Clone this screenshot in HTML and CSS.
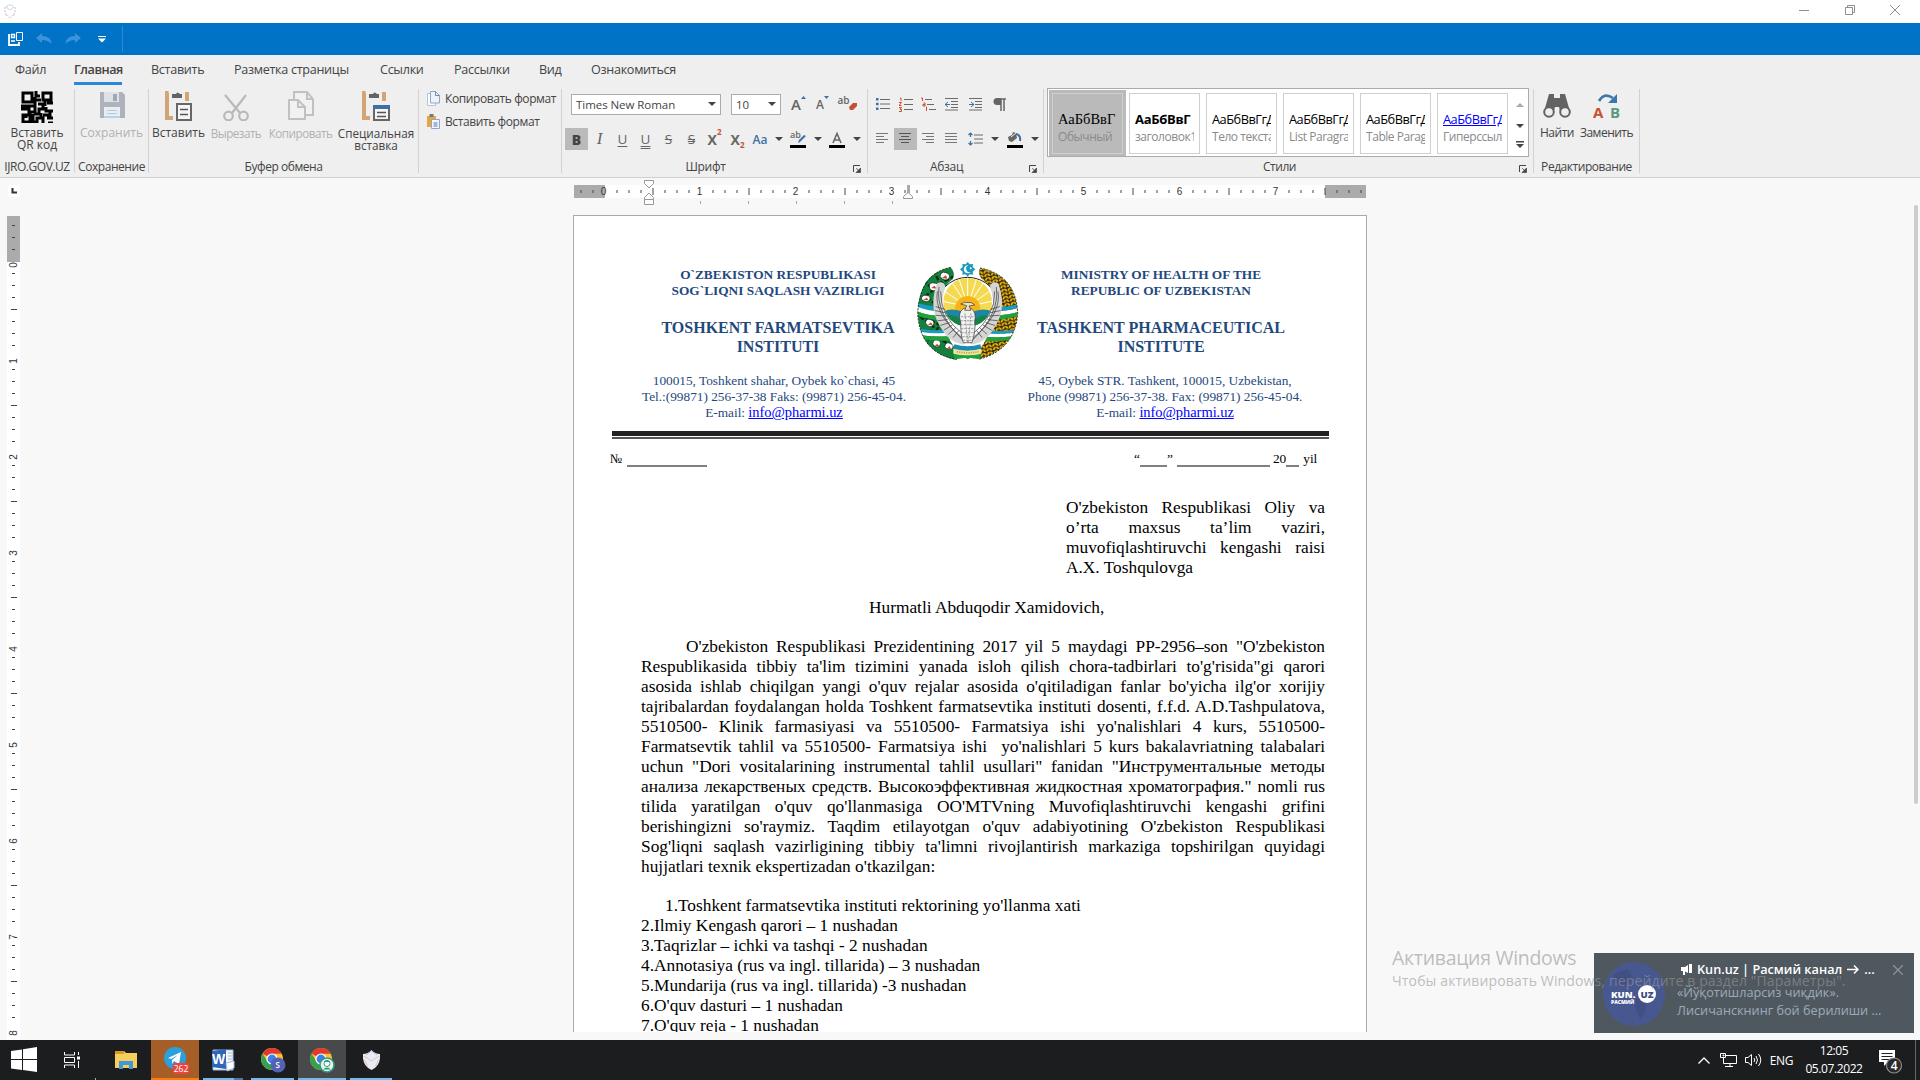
FILE: index.html
```html
<!DOCTYPE html>
<html lang="ru">
<head>
<meta charset="utf-8">
<title>Редактор документов</title>
<link rel="stylesheet" href="styles.css">
</head>
<body>
<svg width="0" height="0" class="defs">
  <defs>
    <symbol id="caret" viewBox="0 0 8 4"><path d="M0 0h8L4 4z" fill="#444"/></symbol>
    <symbol id="launch" viewBox="0 0 8 8"><path d="M.5 7V.5H7" fill="none" stroke="#444"/><path d="M3 3l3 3M7.5 3v4.500H3z" stroke="#444" fill="#444" stroke-width=".7"/></symbol>
    <symbol id="chrome" viewBox="0 0 24 24">
      <circle cx="12" cy="12" r="11" fill="#fbc02d"/>
      <path d="M12 12L2.500 6.500A11 11 0 0 1 21.600 6.800H12z" fill="#df3a2f"/>
      <path d="M2.500 6.500A11 11 0 0 0 11.500 23L16.500 14.500 12 12 7.400 14.600z" fill="#35a04f"/>
      <circle cx="12" cy="12" r="5.600" fill="#fff"/><circle cx="12" cy="12" r="4.400" fill="#3f7fe8"/>
    </symbol>
  </defs>
</svg>

<header class="titlebar">
  <svg class="app-icon" width="14" height="15" viewBox="0 0 14 15" fill="none"><path d="M3 3Q7-1 11 3" stroke="#a9c4ea" stroke-dasharray="2 1"/><path d="M2 3v5q1 3 5 6M12 3v5q-1 3-5 6" stroke="#efb3ae" stroke-dasharray="2 1"/><path d="M3 3l4 3 4-3M2 9l2 3M12 9l-2 3" stroke="#c9d3ea"/></svg>
  <div class="win-buttons">
    <svg width="10" height="10"><path d="M0 5.500h10" stroke="#8f8f8f"/></svg>
    <svg width="10" height="10" fill="none" stroke="#8f8f8f"><path d="M.5 2.500h7v7h-7zM2.500 2.500V.5h7v7h-2"/></svg>
    <svg width="10" height="10"><path d="M0 0l10 10M10 0L0 10" stroke="#8f8f8f"/></svg>
  </div>
</header>

<div class="quickbar">
  <svg width="15" height="14" viewBox="0 0 15 14" fill="none" stroke="#fff"><path d="M1 2v11h10v-3" stroke-width="1.800"/><path d="M3.500 2.500h3v3h-3zM3 9h4" stroke-width="1.400"/><path d="M8.500.5h6v8h-6z"/></svg>
  <svg width="16" height="12" viewBox="0 0 16 12"><path d="M0 5l6-5v3q9 0 9.500 8Q12 7 6 7v3z" fill="#3b93dc"/></svg>
  <svg width="16" height="12" viewBox="0 0 16 12"><path d="M16 5l-6-5v3Q1 3 .5 11 4 7 10 7v3z" fill="#3b93dc"/></svg>
  <svg width="8" height="7" viewBox="0 0 8 7"><path d="M0 0h8v1H0zM0 2.500h8L4 6.500z" fill="#fff"/></svg>
  <i class="quick-sep"></i>
</div>

<nav class="tabs">
  <a>Файл</a><a class="active">Главная</a><a>Вставить</a><a>Разметка страницы</a><a>Ссылки</a><a>Рассылки</a><a>Вид</a><a>Ознакомиться</a>
</nav>

<section class="ribbon">
  <div class="group">
    <div class="body big">
      <button class="tool"><svg width="32" height="32" viewBox="0 0 32 32" fill="none" stroke="#000" stroke-width="3"><path d="M2 2h9v9H2zM22 2h8v7h-8zM2 24h7v7H2zM5 24v3M15 0v5h4M15 9h5M14 6v9H0M0 18h8v3h6v-6M17 13h5v5h-4v5h-5M26 12h6M25 16v4h7M29 20v4h-7M12 23v8h4v-4h6v5M20 22v5M26 27h6M27 32h5M24 10v5"/></svg><span>Вставить<br>QR код</span></button>
    </div>
    <div class="caption">IJRO.GOV.UZ</div>
  </div>
  <div class="group">
    <div class="body big">
      <button class="tool off"><svg width="26" height="28" viewBox="0 0 26 28"><path d="M1 1h22l3 3v23H1z" fill="#aeb2bc"/><path d="M5 1h15v10H5z" fill="#dfe1e6"/><path d="M14 3h4v7h-4z" fill="#a3a7b3"/><path d="M5 16h16v10H5z" fill="#e9eef3"/><path d="M8 19.500h10M8 22.500h10" stroke="#b9c7d5"/><path d="M5 25h16v2H5z" fill="#b5d4e6"/></svg><span>Сохранить</span></button>
    </div>
    <div class="caption">Сохранение</div>
  </div>
  <div class="group clipboard">
    <div class="body big">
      <button class="tool"><svg width="28" height="30" viewBox="0 0 28 30"><path d="M3.500 2H2v25h6M20 3h2v7" fill="none" stroke="#d3a574" stroke-width="4"/><path d="M7 3h4q1-3 4 0h2v4H7z" fill="#636363"/><path d="M12 13h14v16H12z" fill="#f5f5f5" stroke="#666" stroke-width="2"/><path d="M15 18.500h8M15 23.500h8" stroke="#555" stroke-width="1.500"/></svg><span>Вставить</span></button>
      <button class="tool off"><svg width="28" height="30" viewBox="0 0 28 30" fill="none" stroke="#b9b9b9" stroke-width="2.200"><path d="M3 4l15 18M24 4L10 22" /><circle cx="6.500" cy="25" r="4.300"/><circle cx="21.500" cy="25" r="4.300"/></svg><span>Вырезать</span></button>
      <button class="tool off"><svg width="28" height="30" viewBox="0 0 28 30" fill="#f1f1f1" stroke="#c1c1c1" stroke-width="2"><path d="M7 1h13l6 7v16H7zM20 1v7h6"/><path d="M2 9h9l7 7v12H2z"/><path d="M11 9v7h7" fill="none"/></svg><span>Копировать</span></button>
      <button class="tool"><svg width="28" height="30" viewBox="0 0 28 30"><path d="M3.500 2H2v25h6M20 3h2v7" fill="none" stroke="#d3a574" stroke-width="4"/><path d="M7 3h4q1-3 4 0h2v4H7z" fill="#636363"/><path d="M12 15h15v14H12z" fill="#f5f5f5" stroke="#666" stroke-width="2"/><path d="M11 14h17v4H11z" fill="#3f6fa6"/><path d="M15 21.500h9M15 25.500h9" stroke="#555" stroke-width="1.500"/></svg><span>Специальная<br>вставка</span></button>
    </div>
    <div class="caption">Буфер обмена</div>
  </div>
  <div class="group formats">
    <div class="body">
      <button class="wide"><svg width="13" height="15" viewBox="0 0 13 15"><path d="M.5 2.500h8v12h-8z" fill="#fff" stroke="#b5c3da"/><path d="M3.500.5h5l4 4V12h-9z" fill="#eef3fb" stroke="#8fa6c8"/><path d="M8.500.5v4h4" fill="none" stroke="#6f89b2"/></svg>Копировать формат</button>
      <button class="wide"><svg width="13" height="15" viewBox="0 0 13 15"><path d="M0 2h9v11H0z" fill="#e5a63c"/><path d="M2.500 0h4v3h-4z" fill="#777"/><path d="M4.500 5.500h8v9h-8z" fill="#f3f7fd" stroke="#8fa6c8"/><path d="M6.500 8h4v5h-4z" fill="#9fb9de"/></svg>Вставить формат</button>
    </div>
  </div>
  <div class="group fonts">
    <div class="body">
      <div class="row">
        <div class="combo family">Times New Roman<svg width="8" height="4"><use href="#caret"/></svg></div>
        <div class="combo size">10<svg width="8" height="4"><use href="#caret"/></svg></div>
        <span class="cell grow1">A<svg width="5" height="3"><path d="M0 3l2.500-3L5 3z" fill="#3f6fa6"/></svg></span>
        <span class="cell grow2">A<svg width="5" height="3"><path d="M0 0h5L2.500 3z" fill="#3f6fa6"/></svg></span>
        <span class="cell clear">ab<svg width="8" height="7"><path d="M0 4l4-4h4v3L4 7H1z" fill="#c8502f"/></svg></span>
      </div>
      <div class="row">
        <span class="cell on"><b>B</b></span><span class="cell it">I</span><span class="cell u">U</span><span class="cell uu">U</span><span class="cell strike">S</span><span class="cell strike dbl">S</span>
        <span class="cell x">X<sup>2</sup></span><span class="cell x">X<sub>2</sub></span><span class="cell aa">Aa</span><span class="drop"><svg width="8" height="4"><use href="#caret"/></svg></span>
        <span class="cell"><svg width="17" height="17" viewBox="0 0 17 17"><path d="M0 14h16v3H0z"/><path d="M8 12l1-3 5-5 2 1-6 6z" fill="#3f6fa6"/><text x="0" y="7" class="tiny">ab</text></svg></span><span class="drop"><svg width="8" height="4"><use href="#caret"/></svg></span>
        <span class="cell"><svg width="17" height="17" viewBox="0 0 17 17"><path d="M0 14h16v3H0z"/><path d="M4 12L8 2.500 12 12M5.500 9h5" fill="none" stroke="#666" stroke-width="1.600"/></svg></span><span class="drop"><svg width="8" height="4"><use href="#caret"/></svg></span>
      </div>
    </div>
    <div class="caption">Шрифт<svg class="launch" width="8" height="8"><use href="#launch"/></svg></div>
  </div>
  <div class="group para">
    <div class="body">
      <div class="row">
        <span class="cell"><svg width="14" height="12"><path d="M4 1.500h10M4 6h10M4 10.500h10" stroke="#6a6a6a"/><path d="M0 0h2.500v2.500H0zM0 4.800h2.500v2.500H0zM0 9.500h2.500V12H0z" fill="#3f6fa6"/></svg></span>
        <span class="cell"><svg width="14" height="15"><path d="M5 2.500h9M5 7.500h9M5 12.500h9" stroke="#6a6a6a"/><path d="M1 1h1v3M0 5.500h2.500l-2.500 3h2.500M0 10.500h2.500l-1.500 2h1.500v2H0" fill="none" stroke="#c8502f"/></svg></span>
        <span class="cell"><svg width="15" height="14"><path d="M4 2.500h7M6 7.500h7M8 12.500h7" stroke="#6a6a6a"/><path d="M0 1h1.500v3M2.500 6h1.500v3H2V7.500h2M5.500 9.500V14" fill="none" stroke="#c8502f"/></svg></span>
        <span class="cell"><svg width="13" height="13"><path d="M0 .5h13M6 3.500h7M6 6.500h7M6 9.500h7M0 12h13" stroke="#6a6a6a"/><path d="M0 6.500h5M3 4L0 6.500 3 9" fill="none" stroke="#3f6fa6"/></svg></span>
        <span class="cell"><svg width="13" height="13"><path d="M0 .5h13M6 3.500h7M6 6.500h7M6 9.500h7M0 12h13" stroke="#6a6a6a"/><path d="M0 6.500h5M2 4l3 2.500L2 9" fill="none" stroke="#3f6fa6"/></svg></span>
        <span class="cell"><svg width="13" height="13"><path d="M8 1v12M11 1v12M5 1h8" fill="none" stroke="#666" stroke-width="1.500"/><path d="M8 0H4a3.500 3.500 0 0 0 0 7h4z" fill="#666"/></svg></span>
      </div>
      <div class="row">
        <span class="cell"><svg width="13" height="12"><path d="M0 .5h12M0 3.500h8M0 6.500h12M0 9.500h8" stroke="#777"/></svg></span>
        <span class="cell on"><svg width="13" height="12"><path d="M0 .5h12M2 3.500h8M0 6.500h12M2 9.500h8" stroke="#555"/></svg></span>
        <span class="cell"><svg width="13" height="12"><path d="M0 .5h12M4 3.500h8M0 6.500h12M4 9.500h8" stroke="#777"/></svg></span>
        <span class="cell"><svg width="13" height="12"><path d="M0 .5h12M0 3.500h12M0 6.500h12M0 9.500h12" stroke="#777"/></svg></span>
        <span class="cell"><svg width="15" height="14"><path d="M6 3h9M6 7h9M6 11h9" stroke="#6a6a6a"/><path d="M2.500 1v4M.5 3l2-2 2 2M2.500 9v4M.5 11l2 2 2-2" fill="none" stroke="#3f6fa6" stroke-width="1.200"/></svg></span><span class="drop"><svg width="8" height="4"><use href="#caret"/></svg></span>
        <span class="cell fill"><svg width="17" height="17" viewBox="0 0 17 17"><path d="M0 14h16v3H0z"/><path d="M1 6l4-2 1-3 3 1 1 5-5 4-3-1z" fill="#666"/><path d="M9 3q5 1 4 7" fill="none" stroke="#3f6fa6" stroke-width="2"/><path d="M4 6l5-4" stroke="#eee"/></svg></span><span class="drop"><svg width="8" height="4"><use href="#caret"/></svg></span>
      </div>
    </div>
    <div class="caption">Абзац<svg class="launch" width="8" height="8"><use href="#launch"/></svg></div>
  </div>
  <div class="group styles">
    <div class="gallery">
      <div class="style sel"><div><b class="serif">АаБбВвГ</b><span>Обычный</span></div></div>
      <div class="style"><div><b class="bold">АаБбВвГ</b><span>заголовок1</span></div></div>
      <div class="style"><div><b>АаБбВвГгД</b><span>Тело текста</span></div></div>
      <div class="style"><div><b>АаБбВвГгД</b><span>List Paragraph</span></div></div>
      <div class="style"><div><b>АаБбВвГгД</b><span>Table Paragraph</span></div></div>
      <div class="style"><div><b class="link">АаБбВвГгД</b><span>Гиперссылка</span></div></div>
      <div class="scroll"><svg width="8" height="50" viewBox="0 0 8 50"><path d="M0 4h8L4 0z" fill="#aaa"/><path d="M0 21h8l-4 4zM0 38h8v1.500H0zM0 41h8l-4 4z" fill="#444"/></svg></div>
    </div>
    <div class="caption">Стили<svg class="launch" width="8" height="8"><use href="#launch"/></svg></div>
  </div>
  <div class="group edit">
    <div class="body big">
      <button class="tool"><svg width="28" height="26" viewBox="0 0 28 26"><path d="M6 1h5v4h6V1h5l4 14-9 3-1-4h-4l-1 4-9-3z" fill="#636363"/><circle cx="6" cy="19" r="4.800" fill="#eee" stroke="#636363" stroke-width="2"/><circle cx="22" cy="19" r="4.800" fill="#eee" stroke="#636363" stroke-width="2"/></svg><span>Найти</span></button>
      <button class="tool"><svg width="28" height="26" viewBox="0 0 28 26"><path d="M6 8q5-9 14-3" fill="none" stroke="#3f77ac" stroke-width="2.600"/><path d="M24 1v9h-9z" fill="#3f77ac"/><text x="0" y="25" class="ab-a">A</text><text x="17" y="25" class="ab-b">B</text></svg><span>Заменить</span></button>
    </div>
    <div class="caption">Редактирование</div>
  </div>
</section>

<main class="workspace">
  <div class="corner"><svg width="12" height="12"><path d="M4.500 3v4.500H9" fill="none" stroke="#333" stroke-width="2"/></svg></div>
  <svg class="hruler" width="794" height="28" viewBox="573 179 794 28">
    <defs>
      <pattern id="hw" x="604.500" y="185" width="96" height="13" patternUnits="userSpaceOnUse"><path d="M12 5h1v3h-1zM24 5h1v3h-1zM36 5h1v3h-1zM48 3h1v7h-1zM60 5h1v3h-1zM72 5h1v3h-1zM84 5h1v3h-1z" fill="#444"/></pattern>
    </defs>
    <path d="M574 185h792v13H574z" fill="#fff"/><path d="M574 185h31v13h-31zM1325 185h41v13h-41z" fill="#ababab"/>
    <path d="M574 185h792v13H574z" fill="url(#hw)"/>
    <g class="rl"><text x="603.500" y="195">0</text><text x="699.500" y="195">1</text><text x="795.500" y="195">2</text><text x="891.500" y="195">3</text><text x="987.500" y="195">4</text><text x="1083.500" y="195">5</text><text x="1179.500" y="195">6</text><text x="1275.500" y="195">7</text></g>
    <path d="M700.500 201v3M748.500 201v3M796.500 201v3M844.500 201v3M892.500 201v3" stroke="#aaa"/>
    <path d="M907 185h3v8h-3z" fill="#aaa"/>
    <g fill="#fdfdfd" stroke="#999"><path d="M644.500 180.500h9v3l-4.500 4.500-4.500-4.500zM644.500 199.500v-2L649 193l4.500 4.500v2zM644.500 199.500h9v5h-9zM903.500 198.500v-2l4.500-4 4.500 4v2z"/></g>
  </svg>
  <svg class="vruler" width="13" height="824" viewBox="7 216 13 824">
    <defs><pattern id="vw" x="7" y="261" width="13" height="96" patternUnits="userSpaceOnUse"><path d="M5 12h3v1H5zM5 24h3v1H5zM5 36h3v1H5zM4 48h6v1H4zM5 60h3v1H5zM5 72h3v1H5zM5 84h3v1H5z" fill="#444"/></pattern></defs>
    <path d="M7 216h13v824H7z" fill="#fff"/><path d="M7 216h13v46H7z" fill="#ababab"/><path d="M7 216h13v824H7z" fill="url(#vw)"/>
    <g class="rl"><text transform="translate(17 265)rotate(-90)">0</text><text transform="translate(17 361)rotate(-90)">1</text><text transform="translate(17 457)rotate(-90)">2</text><text transform="translate(17 553)rotate(-90)">3</text><text transform="translate(17 649)rotate(-90)">4</text><text transform="translate(17 745)rotate(-90)">5</text><text transform="translate(17 841)rotate(-90)">6</text><text transform="translate(17 937)rotate(-90)">7</text><text transform="translate(17 1033)rotate(-90)">8</text></g>
  </svg>

  <article class="page">
    <div class="letterhead">
      <div class="org">
        <p class="h1">O`ZBEKISTON RESPUBLIKASI</p><p class="h1">SOG`LIQNI SAQLASH VAZIRLIGI</p>
        <p class="h2 first">TOSHKENT FARMATSEVTIKA</p><p class="h2">INSTITUTI</p>
        <div class="contact c1"><p>100015, Toshkent shahar, Oybek ko`chasi, 45</p><p>Tel.:(99871) 256-37-38 Faks: (99871) 256-45-04.</p><p>E-mail: <a>info@pharmi.uz</a></p></div>
      </div>
      <svg class="emblem" width="102" height="99" viewBox="51 36 306 297">
        <defs>
          <clipPath id="lw"><path d="M152 52Q168 70 158 88 122 110 122 170 130 250 168 300L170 330Q60 310 53 190 56 70 152 52z"/></clipPath>
          <clipPath id="rw"><path d="M240 54Q232 74 246 88 284 115 284 180 272 260 238 298L236 328Q345 300 353 190 348 75 240 54z"/></clipPath>
          <clipPath id="sky"><circle cx="203" cy="157" r="73"/></clipPath>
          <pattern id="wheat" width="20" height="22" patternUnits="userSpaceOnUse" patternTransform="rotate(-12)"><path d="M0 0h20v22H0z" fill="#2c2208"/><path d="M1 3Q8 3 9 12 2 12 1 3zM19 3Q12 3 11 12 18 12 19 3zM1 14Q8 14 9 23 2 23 1 14zM19 14Q12 14 11 23 18 23 19 14z" fill="#f5bd12" stroke="#f5bd12" stroke-width="1.500"/></pattern>
        </defs>
        <g clip-path="url(#lw)">
          <path d="M50 30h130v305H50z" fill="#14803b"/>
          <path d="M70 90l30 30-25 20 35 25-30 40 40 20-20 30 50 30M100 60l20 40 40-20M60 200l40 30-20 50" fill="none" stroke="#0b2a15" stroke-width="7" stroke-dasharray="14 6"/>
          <g fill="#fff" stroke="#1b1b1b" stroke-width="2"><path d="M120 80q3-18 17-12 16 3 10 17-12 12-27-5zM88 108q2-12 14-9 16 0 12 15-10 14-24 4zM64 148q0-14 15-12 15 2 10 15-10 10-25-3zM76 218q4-14 16-9 14 4 8 16-12 12-24-7zM98 282q3-16 15-12 12 4 7 16-12 12-22-4zM134 290q4-16 16-10 14 5 7 16-12 8-23-6z"/></g>
          <g fill="#b34a2a"><path d="M126 84l12-8 4 10zM94 114l10-7 6 9zM70 150l10-7 6 8zM84 224l9-7 5 8zM104 288l8-7 5 8zM140 296l9-7 4 8z"/></g>
          <path d="M50 158q30 10 75 14v12q-45-2-75-12z" fill="#1a9bc5"/><path d="M50 170q30 12 75 15v12q-45 0-75-14z" fill="#fff"/><path d="M50 183q30 13 80 16v12q-50-2-80-15z" fill="#1ea23b"/>
          <path d="M60 236q50 8 90 2v9q-40 6-90-2z" fill="#1a9bc5"/><path d="M60 245q50 8 90 2v10q-40 6-90-2z" fill="#fff"/><path d="M60 255q50 8 100 2v14q-50 3-100-4z" fill="#1ea23b"/>
        </g>
        <g clip-path="url(#rw)">
          <path d="M230 30h130v305H230z" fill="url(#wheat)"/>
          <path d="M280 172q45 0 80-12v12q-35 11-80 12z" fill="#1a9bc5"/><path d="M280 184q45 0 80-12v12q-35 12-80 12z" fill="#fff"/><path d="M280 196q45 0 80-12v12q-35 12-80 14z" fill="#1ea23b"/>
          <path d="M240 240q50 6 100 0v9q-50 6-100 0z" fill="#1a9bc5"/><path d="M240 249q50 6 100 0v10q-50 6-100 0z" fill="#fff"/><path d="M240 259q50 6 100 0v10q-50 6-100 4z" fill="#1ea23b"/>
        </g>
        <path d="M152 52Q60 70 53 190 60 310 170 328M240 54Q348 75 353 190 345 300 236 328" fill="none" stroke="#1c2c1c" stroke-width="3" stroke-dasharray="6 4"/>
        <circle cx="203" cy="178" r="96" fill="#fff" stroke="#222" stroke-width="3"/>
        <g clip-path="url(#sky)">
          <path d="M125 80h156v160H125z" fill="#f4da50"/>
          <path d="M203 170L110 150M203 170L120 115M203 170L145 80M203 170L172 70M203 170V70M203 170L235 70M203 170L262 80M203 170L286 112M203 170L300 148" stroke="#fff" stroke-width="3"/>
          <circle cx="203" cy="176" r="38" fill="#f6b418"/>
          <path d="M120 190q25-16 50-10l33 8 34-8q25-6 50 10v40H120z" fill="#1d86a3"/>
          <path d="M120 198q40-12 83 22 43-34 84-20v50H120z" fill="#168246"/>
        </g>
        <g fill="none" stroke-linecap="round"><path d="M122 110Q98 178 140 235 156 262 188 270M284 110Q308 178 266 235 250 262 218 270" stroke="#d5d5d5" stroke-width="27"/>
          <g stroke="#333" stroke-width="2"><path d="M112 125Q100 190 186 264M122 125Q120 200 188 252M117 112Q105 190 190 272M294 125Q306 190 220 264M284 125Q286 200 218 252M289 112Q301 190 216 272"/><path d="M108 170l26 8M106 182l28 6M108 196l30 2M114 212l28-3M122 226l26-8M132 240l24-14M146 252l20-18M160 262l16-20M298 170l-26 8M300 182l-28 6M298 196l-30 2M292 212l-28-3M284 226l-26-8M274 240l-24-14M260 252l-20-18M246 262l-16-20"/></g></g>
        <path d="M190 176q-18 12-8 40 0 42 8 62h26q12-40 8-62 6-30-10-40z" fill="#f1f1f1" stroke="#333" stroke-width="2"/>
        <path d="M183 200h38M181 212h43M181 224h43M183 236h41M184 248h38M187 260h32M188 271h30M195 190l8 90M213 190l-8 90" fill="none" stroke="#777" stroke-width="2" stroke-dasharray="7 3"/>
        <path d="M182 162l12-5 20 1 10 7-17 3 6 13h-19l6-14z" fill="#e9e1c4" stroke="#333" stroke-width="2"/>
        <path d="M163 283q40 12 78 0l3 14q-42 12-84 0z" fill="#1a8cb0"/><path d="M160 296q42 12 84 0v15q-42 10-84 0z" fill="#f3e5a0"/><path d="M160 311q42 10 84 0l-4 17-30-4-7 4-7-4-32 4z" fill="#1ea23b"/><path d="M170 305q34 7 66 0" fill="none" stroke="#c7a84a" stroke-width="5" stroke-dasharray="4 3"/>
        <path d="M203 36l6 7 10-1-1 9 8 7-8 7 1 9-10-1-6 7-6-7-10 1 1-9-8-7 8-7-1-9 10 1z" fill="#1a9bbb"/><path d="M206 46a12 12 0 1 0 6 20 9 9 0 1 1-6-20z" fill="#fff"/><circle cx="212" cy="55" r="3" fill="#fff"/>
      </svg>
      <div class="org right">
        <p class="h1">MINISTRY OF HEALTH OF THE</p><p class="h1">REPUBLIC OF UZBEKISTAN</p>
        <p class="h2 first">TASHKENT PHARMACEUTICAL</p><p class="h2">INSTITUTE</p>
        <div class="contact c2"><p>45, Oybek STR. Tashkent, 100015, Uzbekistan,</p><p>Phone (99871) 256-37-38. Fax: (99871) 256-45-04.</p><p>E-mail: <a>info@pharmi.uz</a></p></div>
      </div>
    </div>
    <div class="rule"></div>
    <div class="regline"><span class="no">№</span><i class="b1"></i><span class="q">“</span><i class="b2"></i><span>”</span><i class="b3"></i><span class="yr">20</span><i class="b4"></i><span class="yil">yil</span></div>
    <div class="to">
      <p>O'zbekiston Respublikasi Oliy va</p><p>o’rta maxsus ta’lim vaziri,</p><p>muvofiqlashtiruvchi kengashi raisi</p><p class="end">A.X. Toshqulovga</p>
    </div>
    <p class="greet">Hurmatli Abduqodir Xamidovich,</p>
    <div class="text">
      <p class="ind">O'zbekiston Respublikasi Prezidentining 2017 yil 5 maydagi PP-2956–son "O'zbekiston</p>
      <p>Respublikasida tibbiy ta'lim tizimini yanada isloh qilish chora-tadbirlari to'g'risida"gi qarori</p>
      <p>asosida ishlab chiqilgan yangi o'quv rejalar asosida o'qitiladigan fanlar bo'yicha ilg'or xorijiy</p>
      <p>tajribalardan foydalangan holda Toshkent farmatsevtika instituti dosenti, f.f.d. A.D.Tashpulatova,</p>
      <p>5510500- Klinik farmasiyasi va 5510500- Farmatsiya ishi yo'nalishlari 4 kurs, 5510500-</p>
      <p>Farmatsevtik tahlil va 5510500- Farmatsiya ishi&nbsp; yo'nalishlari 5 kurs bakalavriatning talabalari</p>
      <p>uchun "Dori vositalarining instrumental tahlil usullari" fanidan "Инструментальные методы</p>
      <p>анализа лекарственых средств. Высокоэффективная жидкостная хроматография." nomli rus</p>
      <p>tilida yaratilgan o'quv qo'llanmasiga OO'MTVning Muvofiqlashtiruvchi kengashi grifini</p>
      <p>berishingizni so'raymiz. Taqdim etilayotgan o'quv adabiyotining O'zbekiston Respublikasi</p>
      <p>Sog'liqni saqlash vazirligining tibbiy ta'limni rivojlantirish markaziga topshirilgan quyidagi</p>
      <p class="end">hujjatlari texnik ekspertizadan o'tkazilgan:</p>
    </div>
    <div class="text list">
      <p class="end ind1">1.Toshkent farmatsevtika instituti rektorining yo'llanma xati</p>
      <p class="end">2.Ilmiy Kengash qarori – 1 nushadan</p>
      <p class="end">3.Taqrizlar – ichki va tashqi - 2 nushadan</p>
      <p class="end">4.Annotasiya (rus va ingl. tillarida) – 3 nushadan</p>
      <p class="end">5.Mundarija (rus va ingl. tillarida) -3 nushadan</p>
      <p class="end">6.O'quv dasturi – 1 nushadan</p>
      <p class="end">7.O'quv reja - 1 nushadan</p>
    </div>
  </article>
  <div class="scrollbar"></div>
</main>

<aside class="toast">
  <svg class="avatar" width="62" height="64" viewBox="0 0 62 64"><ellipse cx="31" cy="32" rx="31" ry="32" fill="#475891"/><path d="M10 12l14-5 6 8-9 10-8-4zM34 34l10 3-2 14-5 6-5-12z" fill="#414f83"/><circle cx="44" cy="32" r="9" fill="#fff"/><text x="8" y="36" class="kun">KUN.</text><text x="37.500" y="36" class="uz">UZ</text><text x="8" y="42" class="ras">РАСМИЙ</text></svg>
  <div class="toast-text">
    <div class="toast-title"><svg width="11" height="11" viewBox="0 0 11 11"><path d="M0 3h4l3-2v8L4 7.500V11H2V7H0zM8 0h3v9H8z" fill="#fff"/></svg>Kun.uz | Расмий канал <svg class="arrow" width="12" height="9" viewBox="0 0 12 9" fill="none" stroke="#fff" stroke-width="1.500"><path d="M0 4.500h11M7 .5l4 4-4 4"/></svg> ...</div>
    <p>«Йўқотишларсиз чиқдик».</p><p>Лисичанскнинг бой берилиши ...</p>
  </div>
  <svg class="toast-x" width="10" height="10"><path d="M0 0l10 10M10 0L0 10" stroke="#8b9298" stroke-width="1.300"/></svg>
</aside>
<div class="watermark"><div>Активация Windows</div><p>Чтобы активировать Windows, перейдите в раздел "Параметры".</p></div>

<footer class="taskbar">
  <div class="task w48"><svg width="26" height="26" viewBox="0 0 26 26" fill="#fff"><path d="M0 4l11-1.600V12H0zM12 2.200L26 0v12H12zM0 13h11v10L0 21.500zM12 13h14v12l-14-2z"/></svg></div>
  <div class="task w48 mini"><svg width="16" height="16" viewBox="0 0 16 16" fill="none" stroke="#fff"><path d="M.5 0v3h10V0M.5 16v-3h10v3M.5 5.500h10v5H.5zM14.500 0v3M14.500 9v7"/><path d="M13 4.500h3v3h-3z" fill="#fff" stroke="none"/></svg></div>
  <div class="task w55"><svg class="folder" width="22" height="18" viewBox="0 0 22 18"><path d="M0 0h9l2 2h11v15H0z" fill="#f7cd5b"/><path d="M0 0h9v3H0z" fill="#d99a1c"/><path d="M4 18v-8h14v8h-4v-4H8v4z" fill="#4097dc"/></svg></div>
  <div class="task w48 tg"><svg width="28" height="26" viewBox="0 0 28 26"><circle cx="12" cy="12" r="11" fill="#2ca0da"/><path d="M5 12l13-6-2 12-5-3-2 3v-4l6-5-7 4z" fill="#fff"/></svg><span class="badge">262</span></div>
  <div class="task w52 run word"><svg width="23" height="23" viewBox="0 0 23 23"><path d="M1 1h20v20H1z" fill="#f2f6fb" stroke="#9db9dc"/><path d="M16 4h4M16 7h4M16 10h4" stroke="#9db9dc"/><path d="M0 2l14-2v20L0 18z" fill="#2f66b7"/><text x="0" y="15" class="w">W</text><path d="M14 14l8-2v7l-7 3z" fill="#fff" stroke="#9db9dc"/></svg></div>
  <div class="task w47 run"><svg width="26" height="26" viewBox="0 0 26 26"><use href="#chrome" width="24" height="24"/><circle cx="18" cy="18" r="7.500" fill="#5462b5"/><text x="15.600" y="21.200" class="s">S</text></svg></div>
  <div class="task w48 run active"><svg width="26" height="26" viewBox="0 0 26 26"><use href="#chrome" width="24" height="24"/><circle cx="18" cy="18" r="7" fill="#e9f3ee" stroke="#2e9c7a" stroke-width="1.500"/><circle cx="18" cy="16.500" r="3" fill="#fff" stroke="#2e9c7a"/><path d="M15 15q3-4 6 0z" fill="#2e9c7a"/><path d="M14 22.500q4-4 8 0z" fill="#2e9c7a"/></svg></div>
  <div class="task w50 run"><svg width="17" height="20" viewBox="0 0 17 20"><path d="M0 4Q5 4 8.500 0 12 4 17 4q1 12-8.500 16Q-1 16 0 4z" fill="#e9ebf0"/><path d="M1 6l7.500 5L16 6" fill="none" stroke="#c6cad6"/><path d="M3 5l5.500-4L14 5" fill="none" stroke="#a9c0e8"/><path d="M1.500 10l3 6M15.500 10l-3 6" stroke="#e8bcb6"/></svg></div>
  <div class="tray">
    <svg width="12" height="7" viewBox="0 0 12 7" fill="none" stroke="#fff" stroke-width="1.300"><path d="M.5 6.500L6 1l5.500 5.500"/></svg>
    <svg width="17" height="14" viewBox="0 0 17 14" fill="none" stroke="#fff"><path d="M6 2.500h10.500v8H3.500V5M10 10.500v3M5 13.500h8M.5.500h5v4h-5zM3 2h1v1H3z"/></svg>
    <svg width="17" height="14" viewBox="0 0 17 14" fill="none" stroke="#fff"><path d="M.5 4.500H3L6.500 1.500v11L3 9.500H.5zM9 5q1.500 2 0 4M11 3q3 4 0 8M13.500 1q4.500 6 0 12"/></svg>
    <span>ENG</span>
    <div class="clock">12:05<br>05.07.2022</div>
    <svg class="note" width="26" height="26" viewBox="0 0 26 26"><path d="M0 1h16v12H9l-4 4v-4H0z" fill="#fff"/><path d="M2.500 4.500h11M2.500 7.500h11M2.500 10.500h8" stroke="#222"/><circle cx="15" cy="16.500" r="7.500" fill="#29292b" stroke="#8c8c8c" stroke-width="1.200"/><text x="11.700" y="21" class="n4">4</text></svg>
  </div>
  <i class="peek"></i>
</footer>
</body>
</html>
```
FILE: styles.css
```css
* { box-sizing: border-box; }
body { margin: 0; width: 1920px; height: 1080px; overflow: hidden; display: flex; flex-direction: column; background: #f8f8f8; color: #444; font-family: "Open Sans", sans-serif; position: relative; }
p { margin: 0; }
svg { display: block; flex: none; }
.defs { position: absolute; }
button { border: 0; background: none; padding: 0; margin: 0; font: inherit; color: inherit; }

.titlebar { height: 23px; flex: none; background: #fff; display: flex; justify-content: space-between; padding: 4px 20px 0 3px; }
.win-buttons { display: flex; gap: 35.500px; padding-top: 1px; }
.quickbar { height: 32px; flex: none; background: #0173c7; display: flex; align-items: center; padding-left: 8px; }
.quickbar svg:nth-child(2) { margin-left: 13px; }
.quickbar svg:nth-child(3) { margin-left: 13px; }
.quickbar svg:nth-child(4) { margin-left: 17px; }
.quick-sep { width: 1px; height: 26px; margin-left: 16px; background: #2d8ad2; }

.tabs { height: 31px; flex: none; background: #efefef; display: grid; grid-template-columns: 59px 77px 83px 146px 74px 85px 52px auto; justify-content: start; padding-left: 15px; font-size: 12.600px; letter-spacing: -.3px; line-height: 30px; white-space: nowrap; }
.tabs .active { font-weight: 600; letter-spacing: -.45px; border-bottom: 3px solid #2b88d8; height: 30px; width: 48px; }

.ribbon { height: 92px; flex: none; background: #efefef; border-bottom: 1px solid #d0d0d0; display: grid; grid-template-columns: 75px 74px 270px 143px 306px 176px 490px 106px; font-size: 12px; letter-spacing: -.45px; white-space: nowrap; }
.group { display: flex; flex-direction: column; margin-top: 3px; height: 84px; border-right: 1px solid #d2d2d2; position: relative; }
.body { height: 71px; flex: none; }
.big { display: flex; justify-content: center; }
.caption { text-align: center; line-height: 14px; }
.fonts .caption, .para .caption { padding-right: 18px; letter-spacing: -.3px; }
.launch { position: absolute; right: 6px; bottom: 0; }
.tool { display: flex; flex-direction: column; align-items: center; justify-content: flex-start; line-height: 12px; padding-top: 2px; }
.tool span { margin-top: auto; height: 33px; }
.off { color: #b1b1b1; }
.clipboard .big { justify-content: flex-start; }
.clipboard .tool:nth-child(1) { width: 59px; }
.clipboard .tool:nth-child(2) { width: 56px; font-size: 11.700px; letter-spacing: -.55px; }
.clipboard .tool:nth-child(3) { width: 73px; font-size: 11.700px; letter-spacing: -.5px; }
.clipboard .tool:nth-child(4) { width: 78px; font-size: 11.700px; }
.formats .body { padding: 0 0 0 8px; margin-top: -2px; margin-bottom: 2px; }
.wide { height: 23px; display: flex; align-items: center; gap: 5px; letter-spacing: -.4px; }

.row { display: flex; align-items: center; height: 34px; }
.row:nth-child(1) { height: 30px; }
.row:nth-child(2) { margin-top: 3px; }
.combo { height: 21px; border: 1px solid #ababab; background: #fff; display: flex; align-items: center; justify-content: space-between; padding: 0 4px; font-size: 11.500px; letter-spacing: -.05px; }
.family { width: 150px; margin-left: 9px; }
.size { width: 50px; margin: 0 6px 0 10px; }
.cell { width: 23px; height: 22px; display: flex; align-items: center; justify-content: center; color: #666; font-size: 14px; font-weight: 600; letter-spacing: 0; position: relative; flex: none; }
.drop { width: 15px; display: flex; justify-content: center; flex: none; }
.on { background: #bababa; color: #444; }
.grow1 { font-size: 15px; }
.grow2 { font-size: 12px; width: 25px; }
.grow1 svg, .grow2 svg { align-self: flex-start; margin-top: 3px; }
.clear { font-size: 10px; padding-bottom: 8px; width: 24px; }
.clear svg { margin: 12px 0 0 -1px; }
.fonts .row:nth-child(2) { padding-left: 3px; }
.fonts .row:nth-child(2) .cell:nth-child(9) { width: 22px; }
.it { font-family: "Liberation Serif", serif; font-style: italic; font-weight: 400; font-size: 17px; }
.u, .uu, .strike { text-decoration: underline; text-underline-offset: 2px; font-weight: 400; font-size: 13.500px; }
.uu { text-decoration-style: double; }
.strike { text-decoration: line-through; }
.dbl { text-decoration-style: double; }
.x { font-weight: 700; font-size: 14px; }
.x sup, .x sub { font-size: 8px; color: #c8502f; }
.x sup { align-self: flex-start; margin-top: -2px; }
.x sub { align-self: flex-end; }
.aa { color: #3f6fa6; font-size: 12px; }
.tiny { font: 600 9px "Open Sans", sans-serif; fill: #666; letter-spacing: 0; }
.fonts .row:nth-child(2) .drop { width: 16px; }
.para .row { padding-left: 3px; }
.para .row .cell:nth-child(n+4) { margin-right: 1px; }
.para .row:nth-child(2) .drop { width: 14px; }
.para .fill { margin-left: 2px; }

.gallery { margin: -1px 5px 3px 3px; height: 69px; width: 482px; border: 1px solid #ababab; background: #fff; display: flex; padding: 1px 0 0 1px; }
.style { width: 77px; height: 66px; padding: 3px 3px; flex: none; }
.style > div { width: 71px; height: 61px; border: 1px solid #cfcfcf; padding: 16px 5px 0 5px; overflow: hidden; color: #000; }
.style.sel { background: #bababa; }
.style b { display: block; font-weight: 400; font-size: 12.800px; line-height: 18px; overflow: hidden; letter-spacing: -.5px; }
.style b.serif { font-family: "Liberation Serif", serif; font-size: 14.500px; letter-spacing: 0; }
.style b.bold { font-weight: 700; font-size: 13px; letter-spacing: -.3px; }
.style b.link { color: #00f; text-decoration: underline; }
.style span { display: block; color: #8a8a8a; overflow: hidden; line-height: 17px; font-size: 12px; }
.scroll { flex: 1; display: flex; justify-content: center; padding-top: 13px; }
.styles .caption { padding-right: 18px; }
.edit .big { justify-content: flex-start; gap: 6px; padding-left: 6px; }
.edit .tool { padding-top: 4px; letter-spacing: -.5px; }
.ab-a, .ab-b { font: 700 15px "Open Sans", sans-serif; fill: #c8502f; }
.ab-b { fill: #5a9a85; }

.workspace { height: 862px; flex: none; display: grid; grid-template-columns: 20px 553px 794px 1fr 6px; grid-template-rows: 37px 817px 8px; }
.corner { grid-area: 1 / 1; margin: 7px 0 0 8px; width: 12px; height: 12px; background: #fff; }
.hruler { grid-area: 1 / 3; margin-top: 1px; }
.vruler { grid-area: 2 / 1 / 4 / 2; margin: 1px 0 0 7px; }
.rl { font: 10px "Liberation Sans", sans-serif; fill: #333; text-anchor: middle; }
.page { grid-area: 2 / 3; background: #fff; border: 1px solid #aaa; border-bottom: 0; overflow: hidden; font-family: "Liberation Serif", serif; color: #000; padding-top: 45px; }
.scrollbar { grid-area: 1 / 5 / 3 / 6; width: 4px; height: 599px; margin-top: 27px; background: #cdcdcd; border-radius: 2px; }

.letterhead { display: flex; height: 170px; padding-left: 64px; color: #1f497d; white-space: nowrap; }
.org { width: 280px; padding-top: 6px; text-align: center; display: flex; flex-direction: column; align-items: center; }
.emblem { margin: 1px 1px 0 -1px; }
.org.right { width: 282px; }
.h1 { font-weight: 700; font-size: 13.330px; line-height: 16px; }
.h2 { font-weight: 700; font-size: 16px; line-height: 18.500px; }
.h2.first { margin-top: 20px; }
.contact { font-size: 13.330px; line-height: 15.700px; margin-top: 17px; letter-spacing: -.02px; }
.contact p:last-child { margin-top: 1px; }
.c1 { margin-left: -8px; }
.c2 { margin-left: 8px; }
.contact a { font-size: 14.500px; color: #00f; text-decoration: underline; letter-spacing: -.05px; line-height: 15px; }
.rule { margin: 0 0 0 38px; width: 717px; height: 8px; border-top: 5px solid #222; border-bottom: 2px solid #555; }
.regline { display: flex; align-items: center; height: 16px; margin: 12px 0 0 36px; font-size: 13.330px; color: #000; }
.regline i { height: 2px; background: #808080; margin-top: 13px; }
.no { width: 17px; font-size: 13px; }
.b1 { width: 80px; margin-right: 427px; }
.q { width: 6px; }
.b2 { width: 27px; }
.b3 { width: 93px; margin-left: 4px; }
.yr { margin-left: 3px; }
.b4 { width: 13px; }
.yil { margin-left: 4px; }
.to, .text, .greet { font-size: 17.330px; line-height: 19.930px; }
.to p, .text p { text-align: justify; text-align-last: justify; white-space: pre-wrap; height: 19.930px; }
.to p.end, .text p.end { text-align-last: left; }
.to { width: 259px; margin: 31px 0 0 492px; }
.greet { margin: 19.930px 0 19.930px 295px; }
.text { width: 684px; margin-left: 67px; }
.text .ind { padding-left: 45px; }
.text .ind1 { padding-left: 24px; }
.list { margin-top: 19.930px; }

.toast { position: absolute; left: 1594px; top: 953px; width: 320px; height: 80px; background: #50585f; display: flex; padding: 9px; }
.toast-text { margin-left: 12px; width: 212px; font-size: 12.700px; color: #9dabb8; white-space: nowrap; line-height: 18px; }
.toast-title { display: flex; align-items: center; gap: 5px; color: #fff; font-weight: 600; margin: -2px 0 5px 4px; height: 18px; }
.toast-text p + p { margin-top: 0; }
.toast-x { margin: 3px 0 0 4px; }
.kun, .uz { font: 800 9.500px "Open Sans", sans-serif; fill: #fff; }
.uz { fill: #3b4a80; }
.ras { font: 800 5px "Open Sans", sans-serif; fill: #fff; }
.watermark { position: absolute; left: 1392px; top: 944px; color: rgba(150,150,150,.62); white-space: nowrap; }
.watermark div { font-size: 19.500px; line-height: 28px; letter-spacing: -.3px; }
.watermark p { font-size: 14px; line-height: 18px; letter-spacing: .14px; }

.taskbar { height: 40px; flex: none; background: #1c1d1f; display: flex; position: relative; }
.task { display: flex; align-items: center; justify-content: center; height: 40px; position: relative; flex: none; }
.w48 { width: 48px; }
.w47 { width: 51px; }
.w55 { width: 55px; }
.w52 { width: 48px; }
.w50 { width: 50px; }
.folder { margin-left: 4px; }
.mini::after { content: ""; position: absolute; right: 0; bottom: 0; width: 1px; height: 2px; background: #76b9ed; }
.tg { background: #a65e28; border-bottom: 2px solid #ff7a0c; }
.tg svg { margin-left: 4px; }
.badge { position: absolute; left: 22px; top: 23px; width: 16px; height: 11px; background: #ef4340; border-radius: 2px; color: #fff; font-size: 8.500px; line-height: 11px; text-align: center; }
.run::after { content: ""; position: absolute; left: 4px; right: 4px; bottom: 0; height: 2px; background: #76b9ed; }
.word::after { background: linear-gradient(90deg, #76b9ed 31px, #4d7ba3 31px); }
.active.run { background: #48494b; }
.active.run::after { left: 0; right: 0; }
.w { font: 800 14px "Liberation Sans", sans-serif; fill: #fff; }
.s { font: 600 8px "Open Sans", sans-serif; fill: #fff; }
.tray { margin-left: auto; display: flex; align-items: center; padding-right: 10px; color: #fff; font-size: 12px; letter-spacing: -.4px; gap: 8px; }
.tray > svg:nth-child(1) { margin-right: 2px; }
.clock { width: 66px; text-align: center; line-height: 18px; margin-right: 4px; }
.note { margin: 4px 0 0; }
.peek { width: 1px; background: #66686a; margin-right: 4px; }
.n4 { font: 600 12px "Open Sans", sans-serif; fill: #fff; }
```
